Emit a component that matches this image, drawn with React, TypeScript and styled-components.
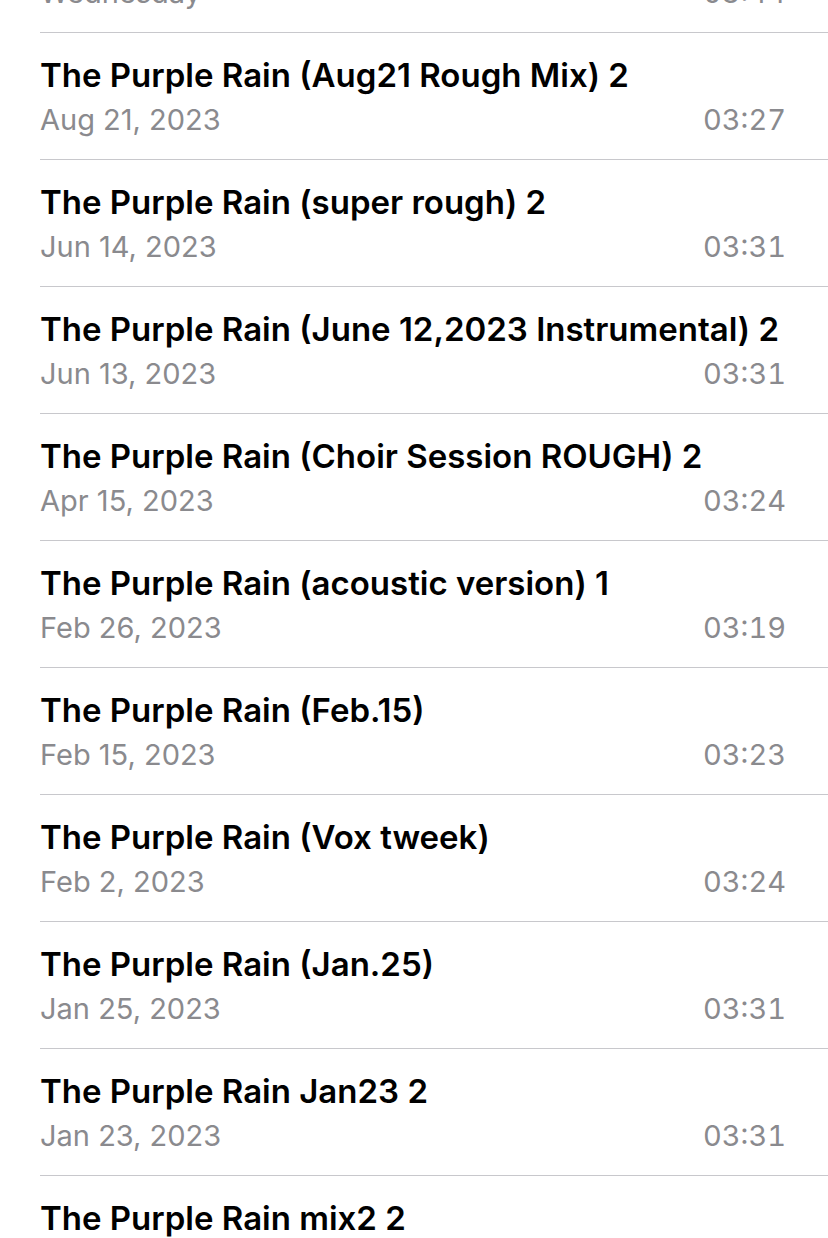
import styled, { createGlobalStyle } from "styled-components";

interface Memo {
  title: string;
  date: string;
  duration: string;
}

const memos: Memo[] = [
  { title: "The Purple Rain (Sept Rough Mix) 2", date: "Wednesday", duration: "03:44" },
  { title: "The Purple Rain (Aug21 Rough Mix) 2", date: "Aug 21, 2023", duration: "03:27" },
  { title: "The Purple Rain (super rough) 2", date: "Jun 14, 2023", duration: "03:31" },
  { title: "The Purple Rain (June 12,2023 Instrumental) 2", date: "Jun 13, 2023", duration: "03:31" },
  { title: "The Purple Rain (Choir Session ROUGH) 2", date: "Apr 15, 2023", duration: "03:24" },
  { title: "The Purple Rain (acoustic version) 1", date: "Feb 26, 2023", duration: "03:19" },
  { title: "The Purple Rain (Feb.15)", date: "Feb 15, 2023", duration: "03:23" },
  { title: "The Purple Rain (Vox tweek)", date: "Feb 2, 2023", duration: "03:24" },
  { title: "The Purple Rain (Jan.25)", date: "Jan 25, 2023", duration: "03:31" },
  { title: "The Purple Rain Jan23 2", date: "Jan 23, 2023", duration: "03:31" },
  { title: "The Purple Rain mix2 2", date: "Jan 20, 2023", duration: "03:31" },
];

const GlobalStyle = createGlobalStyle`
  html, body {
    margin: 0;
    padding: 0;
    background: #ffffff;
  }
  body {
    height: 1238px;
    overflow: hidden;
    font-family: Inter, "Noto Sans", sans-serif;
    -webkit-font-smoothing: antialiased;
  }
`;

// list is scrolled: the first memo is mostly above the top edge
const List = styled.ul`
  list-style: none;
  margin: -94px 0 0 0;
  padding: 0;
`;

const Row = styled.li`
  margin-left: 40px;
  height: 126px;
  padding-right: 42px;
  border-bottom: 1px solid #c8c8cc;
  display: flex;
  flex-direction: column;
  justify-content: center;
  gap: 7px;
`;

const Title = styled.div`
  font-size: 33px;
  font-weight: 600;
  color: #000000;
  letter-spacing: 0;
  line-height: 40px;
  white-space: nowrap;
`;

const Meta = styled.div`
  display: flex;
  justify-content: space-between;
  align-items: center;
  font-size: 29px;
  font-weight: 400;
  color: #8a8a8e;
  line-height: 36px;
`;

const Duration = styled.span`
  font-variant-numeric: tabular-nums;
`;

const App = () => {
  return (
    <>
      <GlobalStyle />
      <List>
        {memos.map((memo) => (
          <Row key={memo.title}>
            <Title>{memo.title}</Title>
            <Meta>
              <span>{memo.date}</span>
              <Duration>{memo.duration}</Duration>
            </Meta>
          </Row>
        ))}
      </List>
    </>
  );
};

export default App;
